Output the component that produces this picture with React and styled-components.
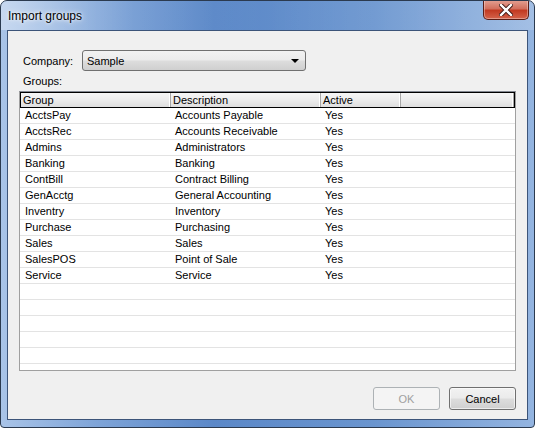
import React from "react";
import styled, { createGlobalStyle } from "styled-components";

const Global = createGlobalStyle`
  html, body { margin: 0; padding: 0; background: #ffffff; }
  body { font-family: "Liberation Sans", "DejaVu Sans", sans-serif; }
  * { box-sizing: border-box; }
`;

const Window = styled.div`
  width: 535px;
  height: 428px;
  display: flex;
  flex-direction: column;
  border: 1px solid #2b3a4f;
  border-radius: 7px 7px 4px 4px;
  overflow: hidden;
  background: linear-gradient(90deg, #a9c4e8 0%, #7ea4d8 18%, #5b88c8 40%, #6a95cf 70%, #93b4e0 100%);
`;

const TitleBar = styled.div`
  height: 29px;
  flex: none;
  display: flex;
  align-items: flex-start;
  justify-content: space-between;
  padding-left: 7px;
  background: linear-gradient(90deg, rgba(255,255,255,0.35) 0%, rgba(255,255,255,0.05) 25%, rgba(255,255,255,0) 50%, rgba(255,255,255,0.15) 100%);
`;

const Title = styled.div`
  font-size: 12px;
  color: #000;
  margin-top: 8px;
  text-shadow: 0 0 6px rgba(255,255,255,0.9), 0 0 3px rgba(255,255,255,0.9);
`;

const CloseButton = styled.div`
  width: 46px;
  height: 20px;
  margin-right: 5px;
  margin-top: -1px;
  border: 1px solid #5a1d16;
  border-top: none;
  border-radius: 0 0 5px 5px;
  background: linear-gradient(180deg, #e4a294 0%, #d2705e 45%, #c23a22 55%, #d4634b 100%);
  box-shadow: inset 0 0 0 1px rgba(255,255,255,0.35);
  display: flex;
  align-items: center;
  justify-content: center;
`;

const Client = styled.div`
  flex: 1;
  margin: 0 6px 7px 6px;
  border: 1px solid #3c5479;
  background: #f0f0f0;
  display: flex;
  flex-direction: column;
  padding: 19px 11px 9px 11px;
  font-size: 11px;
  color: #000;
`;

const CompanyRow = styled.div`
  display: flex;
  align-items: center;
  padding-left: 4px;
  gap: 9px;
`;

const Label = styled.span`
  font-size: 11px;
  width: 50px;
  white-space: nowrap;
`;

const Combo = styled.div`
  width: 224px;
  height: 21px;
  border: 1px solid #707070;
  border-radius: 3px;
  background: linear-gradient(180deg, #f2f2f2 0%, #ebebeb 48%, #dddddd 52%, #cfcfcf 100%);
  display: flex;
  align-items: center;
  justify-content: space-between;
  padding: 0 6px 0 4px;
  font-size: 11px;
`;

const Arrow = styled.div`
  width: 0;
  height: 0;
  border-left: 4px solid transparent;
  border-right: 4px solid transparent;
  border-top: 4px solid #000;
`;

const GroupsLabel = styled.div`
  margin-top: 2px;
  padding-left: 4px;
  font-size: 11px;
  height: 18px;
  line-height: 17px;
`;

const Table = styled.div`
  height: 280px;
  border: 1px solid #a0a0a0;
  border-top-color: #828790;
  background: #ffffff;
  overflow: hidden;
  display: flex;
  flex-direction: column;
`;

const HeaderRow = styled.div`
  display: grid;
  grid-template-columns: 150px 150px 80px 1fr;
  height: 16px;
  flex: none;
  border: 1px solid #000;
  background: linear-gradient(180deg, #f6f6f6 0%, #ececec 50%, #dedede 100%);
`;

const HeaderCell = styled.div`
  border-right: 1px solid #a7a7a7;
  box-shadow: inset -1px 0 0 #ffffff;
  padding-left: 2px;
  font-size: 11px;
  line-height: 14px;
  white-space: nowrap;
  overflow: hidden;
`;

const Row = styled.div`
  display: grid;
  grid-template-columns: 150px 150px 80px 1fr;
  height: 16px;
  flex: none;
  border-bottom: 1px solid #e3e3e3;
`;

const Cell = styled.div`
  padding-left: 5px;
  font-size: 11px;
  line-height: 15px;
  white-space: nowrap;
  overflow: hidden;
`;

const Footer = styled.div`
  margin-top: auto;
  display: flex;
  justify-content: flex-end;
  gap: 9px;
`;

const Button = styled.div`
  width: 67px;
  height: 23px;
  border: 1px solid ${(p) => (p.disabled ? "#adb2b5" : "#707070")};
  border-radius: 3px;
  background: ${(p) =>
    p.disabled
      ? "#f4f4f4"
      : "linear-gradient(180deg, #f2f2f2 0%, #ebebeb 48%, #dddddd 52%, #cfcfcf 100%)"};
  box-shadow: inset 0 0 0 1px ${(p) => (p.disabled ? "#f4f4f4" : "rgba(255,255,255,0.6)")};
  color: ${(p) => (p.disabled ? "#a0a0a0" : "#000")};
  display: flex;
  align-items: center;
  justify-content: center;
  font-size: 11px;
`;

const data = [
  ["AcctsPay", "Accounts Payable", "Yes"],
  ["AcctsRec", "Accounts Receivable", "Yes"],
  ["Admins", "Administrators", "Yes"],
  ["Banking", "Banking", "Yes"],
  ["ContBill", "Contract Billing", "Yes"],
  ["GenAcctg", "General Accounting", "Yes"],
  ["Inventry", "Inventory", "Yes"],
  ["Purchase", "Purchasing", "Yes"],
  ["Sales", "Sales", "Yes"],
  ["SalesPOS", "Point of Sale", "Yes"],
  ["Service", "Service", "Yes"],
];

export default function App() {
  const empties = Array.from({ length: 6 });
  return (
    <>
      <Global />
      <Window>
        <TitleBar>
          <Title>Import groups</Title>
          <CloseButton>
            <svg width="14" height="12" viewBox="0 0 14 12">
              <path
                d="M2 1 L12 11 M12 1 L2 11"
                stroke="#3a1510"
                strokeWidth="4.2"
                strokeLinecap="square"
              />
              <path
                d="M2 1 L12 11 M12 1 L2 11"
                stroke="#ffffff"
                strokeWidth="2.4"
                strokeLinecap="square"
              />
            </svg>
          </CloseButton>
        </TitleBar>
        <Client>
          <CompanyRow>
            <Label>Company:</Label>
            <Combo>
              <span>Sample</span>
              <Arrow />
            </Combo>
          </CompanyRow>
          <GroupsLabel>Groups:</GroupsLabel>
          <Table>
            <HeaderRow>
              <HeaderCell>Group</HeaderCell>
              <HeaderCell>Description</HeaderCell>
              <HeaderCell>Active</HeaderCell>
              <HeaderCell />
            </HeaderRow>
            {data.map((r) => (
              <Row key={r[0]}>
                <Cell>{r[0]}</Cell>
                <Cell>{r[1]}</Cell>
                <Cell>{r[2]}</Cell>
                <Cell />
              </Row>
            ))}
            {empties.map((_, i) => (
              <Row key={"e" + i} />
            ))}
          </Table>
          <Footer>
            <Button disabled>OK</Button>
            <Button>Cancel</Button>
          </Footer>
        </Client>
      </Window>
    </>
  );
}
